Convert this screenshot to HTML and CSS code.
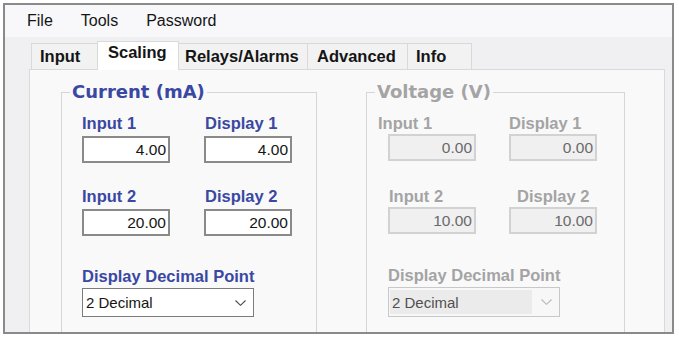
FILE: index.html
```html
<!DOCTYPE html>
<html lang="en">
<head>
    <meta charset="UTF-8">
    <title>Scaling</title>
    <link rel="stylesheet" href="styles.css">
</head>
<body>
    <div class="window">
        <nav class="menubar">
            <span class="menu-item">File</span>
            <span class="menu-item">Tools</span>
            <span class="menu-item">Password</span>
        </nav>

        <div class="client">
            <div class="tabs">
                <div class="tab">Input</div>
                <div class="tab active">Scaling</div>
                <div class="tab tab-relays">Relays/Alarms</div>
                <div class="tab tab-adv">Advanced</div>
                <div class="tab tab-info">Info</div>
            </div>

            <div class="panel">
                <!-- current input scaling -->
                <fieldset class="group group-current">
                    <legend>Current (mA)</legend>
                    <div class="field-row">
                        <div class="field field-in1">
                            <label>Input 1</label>
                            <input class="num" type="text" value="4.00">
                        </div>
                        <div class="field field-disp1">
                            <label>Display 1</label>
                            <input class="num" type="text" value="4.00">
                        </div>
                    </div>
                    <div class="field-row">
                        <div class="field field-in2">
                            <label>Input 2</label>
                            <input class="num" type="text" value="20.00">
                        </div>
                        <div class="field field-disp2">
                            <label>Display 2</label>
                            <input class="num" type="text" value="20.00">
                        </div>
                    </div>
                    <div class="decimal">
                        <label>Display Decimal Point</label>
                        <div class="combo">
                            <span class="combo-text">2 Decimal</span>
                            <svg class="chevron" width="11" height="6" viewBox="0 0 11 6"><polyline points="0.5,0.5 5.5,5.3 10.5,0.5" fill="none" stroke="#4a4a4a" stroke-width="1.1"/></svg>
                        </div>
                    </div>
                </fieldset>

                <!-- voltage input scaling (disabled) -->
                <fieldset class="group group-off">
                    <legend>Voltage (V)</legend>
                    <div class="field-row">
                        <div class="field field-in1">
                            <label>Input 1</label>
                            <input class="num" type="text" value="0.00" disabled>
                        </div>
                        <div class="field field-disp1">
                            <label>Display 1</label>
                            <input class="num" type="text" value="0.00" disabled>
                        </div>
                    </div>
                    <div class="field-row">
                        <div class="field field-in2">
                            <label>Input 2</label>
                            <input class="num" type="text" value="10.00" disabled>
                        </div>
                        <div class="field field-disp2">
                            <label>Display 2</label>
                            <input class="num" type="text" value="10.00" disabled>
                        </div>
                    </div>
                    <div class="decimal">
                        <label>Display Decimal Point</label>
                        <div class="combo combo-off">
                            <span class="combo-text">2 Decimal</span>
                            <svg class="chevron" width="11" height="6" viewBox="0 0 11 6"><polyline points="0.5,0.5 5.5,5.3 10.5,0.5" fill="none" stroke="#b8b8b8" stroke-width="1.1"/></svg>
                        </div>
                    </div>
                </fieldset>
            </div>
        </div>
    </div>
</body>
</html>
```

FILE: styles.css
```css
body {
    margin: 0;
    background: #fff;
    font-family: "Liberation Sans", Arial, sans-serif;
    color: #151515;
}

.window {
    margin: 3px 0 0 3px;
    width: 671px;
    height: 331px;
    box-sizing: border-box;
    border: 2px solid #8a8a8a;
    background: #f0f0f2;
    overflow: hidden;
}

.menubar {
    height: 32px;
    display: flex;
    align-items: center;
    padding-left: 8px;
    background: #f8f8fb;
    font-size: 16px;
}

.menu-item {
    padding: 0 14px;
}

.client {
    padding: 4px 0 0 24px;
}

/* tab strip */
.tabs {
    display: flex;
    align-items: flex-end;
    padding-left: 3px;
}

.tab {
    height: 26px;
    box-sizing: border-box;
    width: 67px;
    margin-left: -1px;
    padding: 3px 0 0 8px;
    border: 1px solid #d9d9d9;
    border-bottom: 0;
    background: #f2f2f3;
    font-size: 16.5px;
    line-height: 19px;
    font-weight: bold;
    white-space: nowrap;
}

.tab.active {
    height: 29px;
    width: 82px;
    margin-bottom: -1px;
    padding: 1px 0 0 10px;
    background: #fff;
    position: relative;
    z-index: 1;
}

.tab-relays { width: 130px; padding-left: 6px; }
.tab-adv { width: 101px; padding-left: 9px; }
.tab-info { width: 65px; }

.panel {
    width: 636px;
    height: 300px;
    box-sizing: border-box;
    border: 1px solid #d9d9d9;
    background: #f9f9fa;
    padding: 11px 0 0 31px;
    display: flex;
    align-items: flex-start;
    gap: 49px;
}

/* group boxes */
.group {
    margin: 0;
    min-width: 0;
    width: 256px;
    height: 290px;
    box-sizing: border-box;
    padding: 11px 0 0 20px;
    border: 1px solid #d6d6d6;
}

.group legend {
    margin-left: -12px;
    padding: 0 2px;
    font-family: "DejaVu Sans", sans-serif;
    font-size: 18px;
    line-height: 22px;
    font-weight: bold;
    color: #3a48a2;
}

.group label {
    display: block;
    font-size: 16.5px;
    line-height: 19px;
    font-weight: bold;
    color: #3a48a2;
    white-space: nowrap;
}

.field-row {
    display: flex;
    gap: 34px;
}

.field-row + .field-row {
    margin-top: 24px;
}

.field {
    width: 88px;
}

.field-disp1 label,
.field-disp2 label {
    margin-left: 1px;
}

.num {
    display: block;
    margin: 3px 0 0;
    width: 88px;
    height: 27px;
    box-sizing: border-box;
    border: 2px solid #8a8a8a;
    padding: 0 2px 0 0;
    background: #fff;
    font-family: "Liberation Sans", Arial, sans-serif;
    font-size: 15.5px;
    color: #151515;
    text-align: right;
    outline: none;
}

.decimal {
    margin-top: 31px;
}

.combo {
    margin-top: 2px;
    width: 172px;
    height: 29px;
    box-sizing: border-box;
    display: flex;
    align-items: center;
    border: 1px solid #7c7c7c;
    background: #fff;
    padding: 0 7px 0 3px;
}

.combo-text {
    flex: 1;
    font-size: 15px;
}

/* disabled voltage group */
.group-off {
    width: 259px;
    padding-left: 21px;
}

.group-off legend {
    margin-left: -13px;
}

.group-off legend,
.group-off label {
    color: #a4a4a4;
}

.group-off .field-row {
    gap: 33px;
}

.group-off .field-row + .field-row {
    margin-top: 26px;
}

.group-off .field-in1 label { margin-left: -10px; }
.group-off .field-disp1 label { margin-left: 0; }
.group-off .field-in2 label { margin-left: 1px; }
.group-off .field-disp2 label { margin-left: 8px; }

.group-off .num {
    margin-top: 1px;
    border-color: #d2d2d2;
    background: #f0f0f0;
    color: #6a6a6a;
    -webkit-text-fill-color: #6a6a6a;
}

.group-off .decimal {
    margin-top: 32px;
}

.combo-off {
    height: 30px;
    border-color: #c8c8c8;
    background: #f7f7f7;
    padding: 2px 7px 2px 1px;
}

.combo-off .combo-text {
    align-self: stretch;
    display: flex;
    align-items: center;
    margin-right: 9px;
    padding-left: 2px;
    background: #ebebeb;
    color: #505050;
}
```
